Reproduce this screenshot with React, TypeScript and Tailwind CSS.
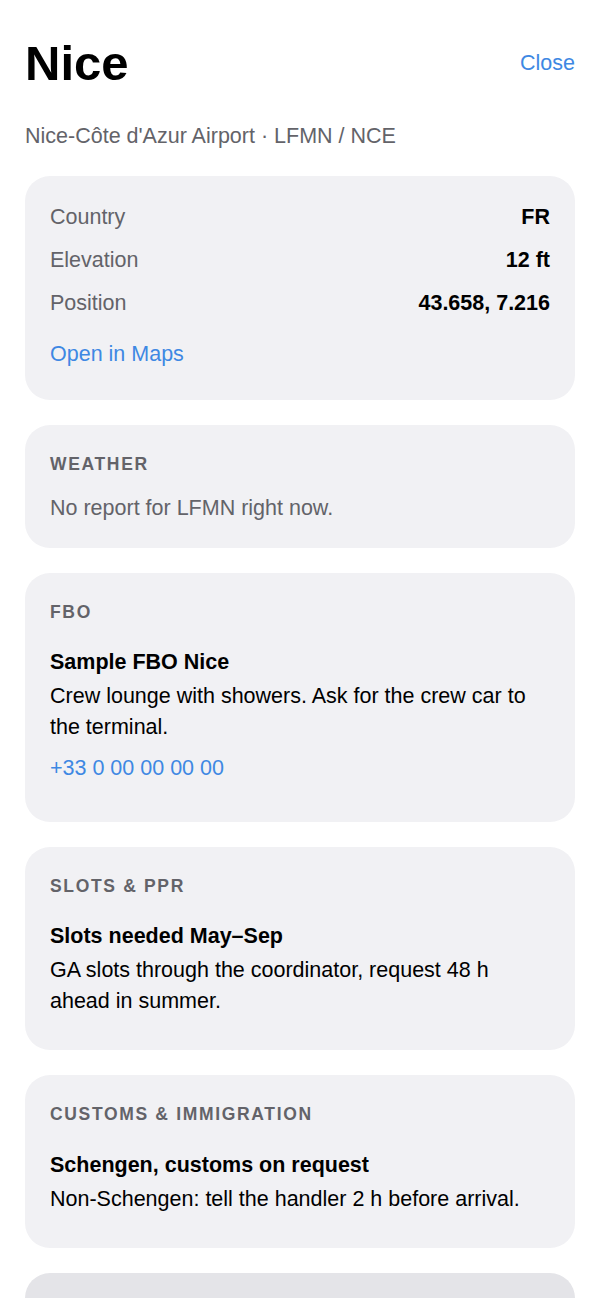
import React from "react";

const font = { fontFamily: '"Liberation Sans", Arial, sans-serif' };

function Label({ children }: { children: React.ReactNode }) {
  return (
    <div className="text-[17.5px] leading-[30px] font-bold tracking-[0.095em] uppercase text-[#636369]">
      {children}
    </div>
  );
}

function Row({ k, v }: { k: string; v: string }) {
  return (
    <div className="flex justify-between items-center leading-[31px]">
      <span className="text-[#636369]">{k}</span>
      <span className="font-bold text-black">{v}</span>
    </div>
  );
}

export default function App() {
  return (
    <div className="min-h-[1298px] bg-white px-[25px] text-[21.5px]" style={font}>
      <div className="pt-[34px] flex justify-between items-center">
        <h1 className="text-[49px] leading-[58px] font-bold text-black">Nice</h1>
        <button className="text-[21.5px] leading-[31px] text-[#3e88e3]">Close</button>
      </div>
      <div className="mt-[29px] leading-[31px] text-[#636369]">
        Nice-Côte d'Azur Airport · LFMN / NCE
      </div>

      <div className="mt-[24px] flex flex-col gap-[25px] pb-[40px]">
        <div className="rounded-[25px] bg-[#f1f1f4] px-[25px] pt-[26px] pb-[29.5px]">
          <div className="flex flex-col gap-[12px]">
            <Row k="Country" v="FR" />
            <Row k="Elevation" v="12 ft" />
            <Row k="Position" v="43.658, 7.216" />
          </div>
          <div className="mt-[20px] leading-[31px] text-[#3e88e3]">Open in Maps</div>
        </div>

        <div className="rounded-[25px] bg-[#f1f1f4] px-[25px] pt-[24px] pb-[23.5px]">
          <Label>Weather</Label>
          <div className="mt-[14.5px] leading-[31px] text-[#636369]">
            No report for LFMN right now.
          </div>
        </div>

        <div className="rounded-[25px] bg-[#f1f1f4] px-[25px] pt-[24px] pb-[37.5px]">
          <Label>FBO</Label>
          <div className="mt-[20.5px] leading-[31px] font-bold text-black">Sample FBO Nice</div>
          <div className="mt-[3px] leading-[31px] text-black">
            Crew lounge with showers. Ask for the crew car to the terminal.
          </div>
          <div className="mt-[10px] leading-[31px] text-[#3e88e3]">+33 0 00 00 00 00</div>
        </div>

        <div className="rounded-[25px] bg-[#f1f1f4] px-[25px] pt-[24px] pb-[34px]">
          <Label>Slots &amp; PPR</Label>
          <div className="mt-[20.5px] leading-[31px] font-bold text-black">Slots needed May–Sep</div>
          <div className="mt-[3px] leading-[30.5px] text-black">
            GA slots through the coordinator, request 48 h ahead in summer.
          </div>
        </div>

        <div className="rounded-[25px] bg-[#f1f1f4] px-[25px] pt-[24px] pb-[33px]">
          <Label>Customs &amp; Immigration</Label>
          <div className="mt-[20.5px] leading-[31px] font-bold text-black">
            Schengen, customs on request
          </div>
          <div className="mt-[3px] leading-[31px] text-black">
            Non-Schengen: tell the handler 2 h before arrival.
          </div>
        </div>

        <div className="rounded-[25px] bg-[#e4e4e8] h-[120px]" />
      </div>
    </div>
  );
}
